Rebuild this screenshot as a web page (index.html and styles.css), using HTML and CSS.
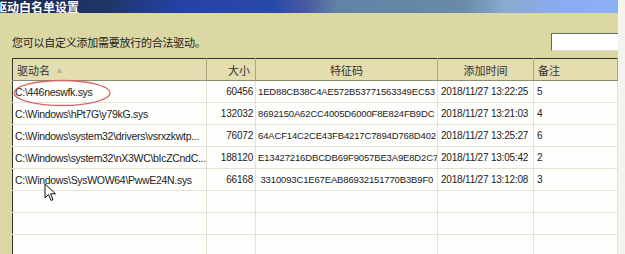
FILE: index.html
```html
<!DOCTYPE html>
<html lang="zh-CN">
<head>
  <meta charset="utf-8">
  <title>驱动白名单设置</title>
  <link rel="stylesheet" href="styles.css">
</head>
<body>
  <div id="window">
    <div class="titlebar">驱动白名单设置</div>
    <div class="content">
      <div class="toolbar">
        <span class="hint">您可以自定义添加需要放行的合法驱动。</span>
        <input type="text" class="search">
      </div>
      <table class="list">
        <colgroup>
          <col class="c-name"><col class="c-size"><col class="c-hash"><col class="c-time"><col class="c-note">
        </colgroup>
        <thead>
          <tr>
            <th class="left">驱动名 <span class="sort">&#9650;</span></th>
            <th class="right">大小</th>
            <th>特征码</th>
            <th>添加时间</th>
            <th class="left">备注</th>
          </tr>
        </thead>
        <tbody>
          <tr><td class="path">C:\446neswfk.sys</td><td class="num">60456</td><td class="hash">1ED88CB38C4AE572B53771563349EC53</td><td>2018/11/27 13:22:25</td><td>5</td></tr>
          <tr><td class="path">C:\Windows\hPt7G\y79kG.sys</td><td class="num">132032</td><td class="hash">8692150A62CC4005D6000F8E824FB9DC</td><td>2018/11/27 13:21:03</td><td>4</td></tr>
          <tr><td class="path">C:\Windows\system32\drivers\vsrxzkwtp...</td><td class="num">76072</td><td class="hash">64ACF14C2CE43FB4217C7894D768D402</td><td>2018/11/27 13:25:27</td><td>6</td></tr>
          <tr><td class="path">C:\Windows\system32\nX3WC\bIcZCndC...</td><td class="num">188120</td><td class="hash">E13427216DBCDB69F9057BE3A9E8D2C7</td><td>2018/11/27 13:05:42</td><td>2</td></tr>
          <tr><td class="path">C:\Windows\SysWOW64\PwwE24N.sys</td><td class="num">66168</td><td class="hash">&nbsp;3310093C1E67EAB86932151770B3B9F0</td><td>2018/11/27 13:12:08</td><td>3</td></tr>
          <tr><td></td><td></td><td></td><td></td><td></td></tr>
          <tr><td></td><td></td><td></td><td></td><td></td></tr>
          <tr><td></td><td></td><td></td><td></td><td></td></tr>
        </tbody>
      </table>
    </div>
    <!-- annotation: red circle round the first entry -->
    <svg class="mark" width="110" height="34" viewBox="0 0 110 34">
      <ellipse cx="55" cy="16" rx="48" ry="12.5" fill="none" stroke="#cf6a6a" stroke-width="1.3"/>
    </svg>
    <!-- mouse pointer -->
    <svg class="cursor" width="14" height="20" viewBox="0 0 14 20">
      <path d="M1 1 L1 15 L4.5 11.5 L7 17.5 L9 16.6 L6.6 10.8 L11.5 10.8 Z" fill="#fff" stroke="#111" stroke-width="1" stroke-linejoin="round"/>
    </svg>
  </div>
</body>
</html>
```

FILE: styles.css
```css
body {
  margin: 0;
  background-color: #f3f3ef;
  font-family: "Liberation Sans", "Noto Sans CJK SC", sans-serif;
  color: #222;
}
#window {
  position: relative;
  width: 618px;
  height: 254px;
  overflow: hidden;
  background-color: #dbd8a4;
}
.titlebar {
  height: 13px;
  line-height: 13px;
  margin-left: -5px;
  font-family: "Noto Sans CJK SC", sans-serif;
  font-size: 12px;
  font-weight: bold;
  color: #fff;
  background: linear-gradient(to right, #1b2a48 0%, #203668 18%, #2442a8 30%, #2a4aa8 45%, #4a5aa0 50%, #5f84a4 55%, #6a8aa8 75%, #8aaad0 82%, #8aacee 90%, #8fb0f2 100%);
}
.content {
  padding: 0 1px 0 12px;
}
.toolbar {
  display: flex;
  justify-content: space-between;
  align-items: center;
  height: 45px;
}
.hint {
  font-family: "Noto Sans CJK SC", sans-serif;
  font-size: 11px;
  padding-top: 12px;
  color: #222;
  letter-spacing: -0.25px;
}
.search {
  width: 66px;
  height: 16px;
  margin: 12px -1px 0 0;
  padding: 0;
  border: 1px solid #666;
  border-right: none;
  border-bottom: 1px solid #ddd;
  background-color: #fff;
}
.list {
  width: 605px;
  border-collapse: collapse;
  table-layout: fixed;
  border-top: 1px solid #333;
  border-left: 1px solid #333;
  font-size: 10px;
}
.c-name { width: 194px; }
.c-size { width: 49px; }
.c-hash { width: 182px; }
.c-time { width: 96px; }
.c-note { width: 84px; }
th {
  height: 21px;
  padding: 0 5px;
  font-family: "Noto Sans CJK SC", sans-serif;
  font-size: 11px;
  font-weight: normal;
  color: #333;
  background-color: #e3ddaf;
  border-right: 1px solid #aaa785;
  border-bottom: 1px solid #8c8a6c;
  text-align: center;
}
th.left { text-align: left; padding-left: 4px; }
th.right { text-align: right; }
.sort {
  font-size: 6px;
  color: #b8b49a;
  margin-left: 4px;
  vertical-align: 2px;
}
td {
  height: 21px;
  padding: 0 3px;
  background-color: #fefefc;
  border-right: 1px solid #e4e2d0;
  border-bottom: 1px solid #e4e2d0;
  white-space: nowrap;
  overflow: hidden;
  letter-spacing: -0.2px;
}
td.path { font-size: 10.5px; letter-spacing: -0.3px; padding-left: 2px; }
td.num { text-align: right; padding-right: 2px; }
td.hash { font-size: 9.5px; letter-spacing: -0.15px; padding-left: 2px; }
.mark {
  position: absolute;
  left: 7px;
  top: 77px;
}
.cursor {
  position: absolute;
  left: 44px;
  top: 183px;
}
```
